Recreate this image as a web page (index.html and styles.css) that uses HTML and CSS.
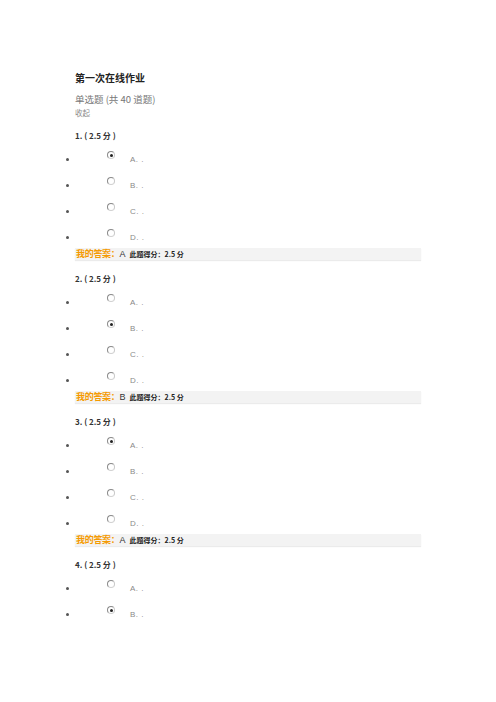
FILE: index.html
```html
<!DOCTYPE html>
<html lang="zh-CN">
<head>
<meta charset="utf-8">
<title>第一次在线作业</title>
<link rel="stylesheet" href="styles.css">
</head>
<body>
<div class="page">
  <h1 class="title">第一次在线作业</h1>
  <div class="subtitle">单选题 (共 40 道题)</div>
  <div class="collapse">收起</div>

  <div class="question">
    <div class="qhead">1. ( 2.5 分 )</div>
    <ul class="options">
      <li class="opt"><span class="dot"></span><span class="radio checked"></span><span class="label">A. .</span></li>
      <li class="opt"><span class="dot"></span><span class="radio"></span><span class="label">B. .</span></li>
      <li class="opt"><span class="dot"></span><span class="radio"></span><span class="label">C. .</span></li>
      <li class="opt"><span class="dot"></span><span class="radio"></span><span class="label">D. .</span></li>
    </ul>
    <div class="answer"><span class="mine">我的答案：</span><span class="letter">A</span><span class="score">此题得分：2.5 分</span></div>
  </div>

  <div class="question">
    <div class="qhead">2. ( 2.5 分 )</div>
    <ul class="options">
      <li class="opt"><span class="dot"></span><span class="radio"></span><span class="label">A. .</span></li>
      <li class="opt"><span class="dot"></span><span class="radio checked"></span><span class="label">B. .</span></li>
      <li class="opt"><span class="dot"></span><span class="radio"></span><span class="label">C. .</span></li>
      <li class="opt"><span class="dot"></span><span class="radio"></span><span class="label">D. .</span></li>
    </ul>
    <div class="answer"><span class="mine">我的答案：</span><span class="letter">B</span><span class="score">此题得分：2.5 分</span></div>
  </div>

  <div class="question">
    <div class="qhead">3. ( 2.5 分 )</div>
    <ul class="options">
      <li class="opt"><span class="dot"></span><span class="radio checked"></span><span class="label">A. .</span></li>
      <li class="opt"><span class="dot"></span><span class="radio"></span><span class="label">B. .</span></li>
      <li class="opt"><span class="dot"></span><span class="radio"></span><span class="label">C. .</span></li>
      <li class="opt"><span class="dot"></span><span class="radio"></span><span class="label">D. .</span></li>
    </ul>
    <div class="answer"><span class="mine">我的答案：</span><span class="letter">A</span><span class="score">此题得分：2.5 分</span></div>
  </div>

  <div class="question">
    <div class="qhead">4. ( 2.5 分 )</div>
    <ul class="options">
      <li class="opt"><span class="dot"></span><span class="radio"></span><span class="label">A. .</span></li>
      <li class="opt"><span class="dot"></span><span class="radio checked"></span><span class="label">B. .</span></li>
    </ul>
  </div>
</div>
</body>
</html>
```

FILE: styles.css
```css
html, body {
  margin: 0;
  padding: 0;
  background: #ffffff;
}
body {
  width: 496px;
  height: 702px;
  overflow: hidden;
  font-family: "Noto Sans CJK SC", "Liberation Sans", sans-serif;
  color: #333;
}
.page {
  padding: 71px 0 0 75px;
}
.title {
  margin: 0;
  font-size: 10px;
  line-height: 14px;
  font-weight: bold;
  color: #222;
}
.subtitle {
  margin-top: 7px;
  font-size: 9.5px;
  line-height: 14px;
  color: #777;
}
.collapse {
  margin-top: 1px;
  font-size: 7.5px;
  line-height: 12px;
  color: #8a8a8a;
}
.question {
  margin-top: 11px;
}
.question + .question {
  margin-top: 13px;
}
.qhead {
  font-size: 8px;
  line-height: 12px;
  font-weight: bold;
  color: #333;
}
.options {
  list-style: none;
  margin: 2px 0 0 0;
  padding: 0;
}
.opt {
  height: 26px;
  display: flex;
  align-items: flex-start;
  margin-left: -9px;
}
.dot {
  width: 3px;
  height: 3px;
  border-radius: 50%;
  background: #555;
  margin-top: 14px;
}
.radio {
  width: 8px;
  height: 8px;
  box-sizing: border-box;
  border-radius: 50%;
  border: 1px solid #8a8a8a;
  border-right-color: #c8c8c8;
  border-bottom-color: #d0d0d0;
  margin-left: 38px;
  margin-top: 7px;
  position: relative;
}
.radio.checked::after {
  content: "";
  position: absolute;
  left: 1.5px;
  top: 1.5px;
  width: 3px;
  height: 3px;
  border-radius: 50%;
  background: #222;
}
.label {
  margin-left: 15px;
  margin-top: 11px;
  font-size: 8px;
  line-height: 10px;
  color: #8a8a8a;
  letter-spacing: 0.5px;
  font-family: "Liberation Sans", "Noto Sans CJK SC", sans-serif;
}
.answer {
  width: 346px;
  height: 12px;
  background: #f3f3f3;
  box-shadow: 0 1px 1px #ebebeb;
  display: flex;
  align-items: center;
  font-size: 8px;
  line-height: 12px;
}
.mine {
  color: #f59a00;
  font-weight: bold;
  font-size: 9px;
  letter-spacing: -0.3px;
  margin-left: 1px;
}
.letter {
  color: #333;
  font-size: 9px;
  margin-left: 0;
  font-family: "Liberation Sans", sans-serif;
}
.score {
  margin-left: 4px;
  font-size: 7px;
  font-weight: bold;
  color: #222;
}
```
